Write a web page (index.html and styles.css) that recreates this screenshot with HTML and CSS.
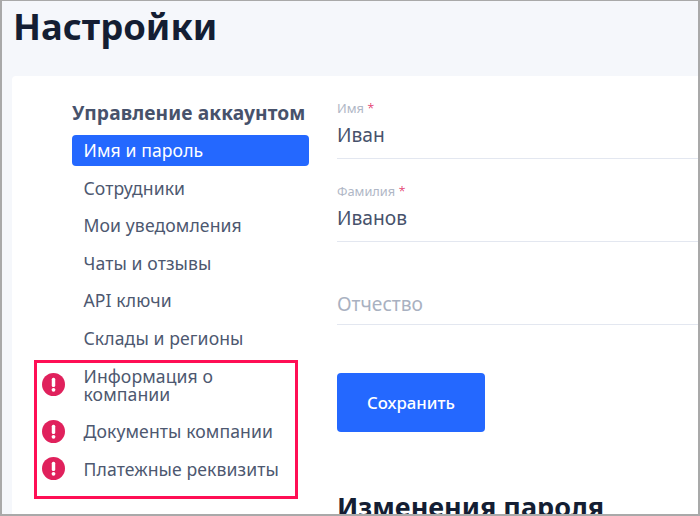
FILE: index.html
```html
<!DOCTYPE html>
<html lang="ru">
<head>
<meta charset="utf-8">
<title>Настройки</title>
<link rel="stylesheet" href="styles.css">
</head>
<body>
<div class="frame">
  <h1 class="page-title">Настройки</h1>
  <main class="card">
    <nav class="sidebar">
      <h2 class="side-title">Управление аккаунтом</h2>
      <ul class="menu">
        <li class="item active">Имя и пароль</li>
        <li class="item">Сотрудники</li>
        <li class="item">Мои уведомления</li>
        <li class="item">Чаты и отзывы</li>
        <li class="item">API ключи</li>
        <li class="item">Склады и регионы</li>
        <li class="item">Информация о компании
          <svg class="alert" viewBox="0 0 24 24"><circle cx="12" cy="12" r="12" fill="#e0215c"/><rect x="10.2" y="5" width="3.6" height="9.6" rx="1.6" fill="#fff"/><circle cx="12" cy="17.6" r="2" fill="#fff"/></svg>
        </li>
        <li class="item">Документы компании
          <svg class="alert" viewBox="0 0 24 24"><circle cx="12" cy="12" r="12" fill="#e0215c"/><rect x="10.2" y="5" width="3.6" height="9.6" rx="1.6" fill="#fff"/><circle cx="12" cy="17.6" r="2" fill="#fff"/></svg>
        </li>
        <li class="item">Платежные реквизиты
          <svg class="alert" viewBox="0 0 24 24"><circle cx="12" cy="12" r="12" fill="#e0215c"/><rect x="10.2" y="5" width="3.6" height="9.6" rx="1.6" fill="#fff"/><circle cx="12" cy="17.6" r="2" fill="#fff"/></svg>
        </li>
      </ul>
    </nav>
    <section class="form">
      <div class="field">
        <div class="label">Имя <span class="req">*</span></div>
        <div class="value">Иван</div>
      </div>
      <div class="field">
        <div class="label">Фамилия <span class="req">*</span></div>
        <div class="value">Иванов</div>
      </div>
      <div class="field">
        <div class="label">&nbsp;</div>
        <div class="value placeholder">Отчество</div>
      </div>
      <button class="save" type="button">Сохранить</button>
      <h2 class="section-title">Изменения пароля</h2>
    </section>
  </main>
  <div class="highlight"></div>
</div>
</body>
</html>
```
FILE: styles.css
```css
* { box-sizing: border-box; }
html, body { margin: 0; height: 100%; overflow: hidden; }
body { font-family: "Noto Sans", sans-serif; background: #f5f7fb; }
.frame {
  position: relative;
  width: 700px;
  height: 516px;
  overflow: hidden;
  border: solid #a9a9a9;
  border-width: 1px 2px 2px 2px;
  padding: 0 0 0 10px;
  background: #f5f7fb;
}
.page-title {
  margin: 0;
  height: 75px;
  padding: 0 0 0 1px;
  font-size: 36.4px;
  line-height: 50px;
  font-weight: 700;
  color: #141e33;
}
.card {
  display: flex;
  height: 500px;
  background: #fff;
  border-radius: 4px 0 0 0;
  padding: 24px 0 0 60px;
}
.sidebar { width: 237px; flex: none; }
.side-title {
  margin: 0;
  height: 35px;
  font-size: 19.2px;
  line-height: 26px;
  font-weight: 700;
  letter-spacing: 0.1px;
  color: #47526b;
  white-space: nowrap;
}
.menu { list-style: none; margin: 0; padding: 0; display: flex; flex-direction: column; gap: 6.6px; }
.item {
  position: relative;
  padding: 6px 12px 7px 11.5px;
  font-size: 17.6px;
  line-height: 18px;
  letter-spacing: 0.1px;
  color: #4d5870;
  border-radius: 4px;
}
.item.active { background: #2468ff; color: #fff; }
.alert { position: absolute; left: -30px; top: 50%; width: 23px; height: 23px; margin-top: -12px; }
.form { flex: 1; padding: 0 0 0 28px; }
.field { height: 83px; }
.label { height: 18px; font-size: 12.8px; line-height: 16px; color: #b0b7c6; }
.req { color: #e0215c; font-size: 13px; font-weight: 300; }
.value {
  height: 41px;
  padding-top: 4px;
  font-size: 19.2px;
  line-height: 26px;
  color: #47526b;
  border-bottom: 1px solid #e3e7f0;
}
.placeholder { color: #a9b1c1; padding-top: 7px; }
.save {
  display: block;
  width: 148px;
  height: 59px;
  margin-top: 24px;
  border: 0;
  border-radius: 4px;
  background: #2468ff;
  color: #fff;
  font: 500 16.8px "Noto Sans", sans-serif;
}
.section-title {
  margin: 58px 0 0 0;
  font-size: 27px;
  line-height: 34px;
  font-weight: 700;
  color: #141e33;
  white-space: nowrap;
}
.highlight {
  position: absolute;
  left: 32px;
  top: 359px;
  width: 264px;
  height: 139px;
  border: 3px solid #ff0f55;
}
```
